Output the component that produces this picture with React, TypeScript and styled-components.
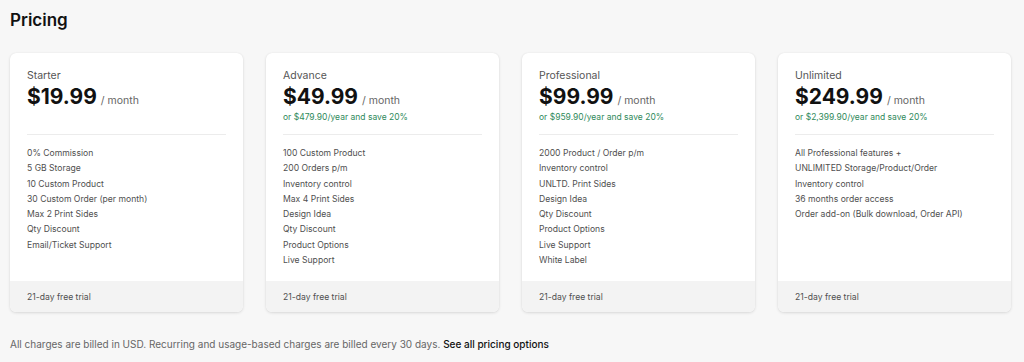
import React from 'react'
import styled, {createGlobalStyle} from 'styled-components'

const GlobalStyle = createGlobalStyle`
  html, body {
    margin: 0;
    padding: 0;
    background: #f7f7f7;
  }
  body {
    font-family: Inter, "Noto Sans", sans-serif;
    color: #1a1a1a;
  }
`

type Plan = {
  name: string
  price: string
  yearly?: string
  features: string[]
}

const plans: Plan[] = [
  {
    name: 'Starter',
    price: '$19.99',
    features: [
      '0% Commission',
      '5 GB Storage',
      '10 Custom Product',
      '30 Custom Order (per month)',
      'Max 2 Print Sides',
      'Qty Discount',
      'Email/Ticket Support',
    ],
  },
  {
    name: 'Advance',
    price: '$49.99',
    yearly: 'or $479.90/year and save 20%',
    features: [
      '100 Custom Product',
      '200 Orders p/m',
      'Inventory control',
      'Max 4 Print Sides',
      'Design Idea',
      'Qty Discount',
      'Product Options',
      'Live Support',
    ],
  },
  {
    name: 'Professional',
    price: '$99.99',
    yearly: 'or $959.90/year and save 20%',
    features: [
      '2000 Product / Order p/m',
      'Inventory control',
      'UNLTD. Print Sides',
      'Design Idea',
      'Qty Discount',
      'Product Options',
      'Live Support',
      'White Label',
    ],
  },
  {
    name: 'Unlimited',
    price: '$249.99',
    yearly: 'or $2,399.90/year and save 20%',
    features: [
      'All Professional features +',
      'UNLIMITED Storage/Product/Order',
      'Inventory control',
      '36 months order access',
      'Order add-on (Bulk download, Order API)',
    ],
  },
]

const Page = styled.main`
  padding: 9px 13px 0 10px;
`

const Title = styled.h1`
  margin: 0;
  font-size: 17px;
  font-weight: 600;
  line-height: 22px;
  color: #111;
`

const Grid = styled.section`
  display: grid;
  grid-template-columns: repeat(4, 233px);
  column-gap: 23px;
  margin-top: 22px;
`

const Card = styled.article`
  display: flex;
  flex-direction: column;
  background: #fff;
  border-radius: 6px;
  box-shadow: 0 1px 3px rgba(0, 0, 0, 0.12), 0 0 1px rgba(0, 0, 0, 0.08);
  overflow: hidden;
`

const CardBody = styled.div`
  flex: 1;
  padding: 16px 17px 13px;
`

const PlanName = styled.div`
  font-size: 10.5px;
  line-height: 14px;
  color: #555;
`

const PriceRow = styled.div`
  display: flex;
  align-items: baseline;
  gap: 4px;
  margin-top: 1px;
`

const Price = styled.span`
  font-size: 21px;
  font-weight: 700;
  line-height: 26px;
  color: #111;
`

const Per = styled.span`
  font-size: 10.5px;
  color: #666;
`

const Yearly = styled.div<{$empty?: boolean}>`
  font-size: 8.5px;
  line-height: 14px;
  color: #2f8a5b;
  visibility: ${p => (p.$empty ? 'hidden' : 'visible')};
`

const Divider = styled.hr`
  margin: 10px 0 11px;
  border: 0;
  border-top: 1px solid #ececec;
`

const Features = styled.ul`
  list-style: none;
  margin: 0;
  padding: 0;
`

const Feature = styled.li`
  font-size: 8.6px;
  line-height: 15.3px;
  color: #4f4f4f;
`

const CardFooter = styled.div`
  background: #f3f3f3;
  padding: 0 17px;
  height: 31px;
  display: flex;
  align-items: center;
  font-size: 8.6px;
  color: #4f4f4f;
`

const Note = styled.p`
  margin: 26px 0 0;
  font-size: 10px;
  color: #666;
`

const NoteLink = styled.a`
  color: #111;
  font-weight: 500;
  text-decoration: underline;
  text-underline-offset: 2px;
`

export default function App() {
  return (
    <>
      <GlobalStyle />
      <Page>
        <Title>Pricing</Title>
        <Grid>
          {plans.map(plan => (
            <Card key={plan.name}>
              <CardBody>
                <PlanName>{plan.name}</PlanName>
                <PriceRow>
                  <Price>{plan.price}</Price>
                  <Per>/ month</Per>
                </PriceRow>
                <Yearly $empty={!plan.yearly}>{plan.yearly ?? '\u00a0'}</Yearly>
                <Divider />
                <Features>
                  {plan.features.map(f => (
                    <Feature key={f}>{f}</Feature>
                  ))}
                </Features>
              </CardBody>
              <CardFooter>21-day free trial</CardFooter>
            </Card>
          ))}
        </Grid>
        <Note>
          All charges are billed in USD. Recurring and usage-based charges are billed every 30 days.{' '}
          <NoteLink href="#">See all pricing options</NoteLink>
        </Note>
      </Page>
    </>
  )
}
